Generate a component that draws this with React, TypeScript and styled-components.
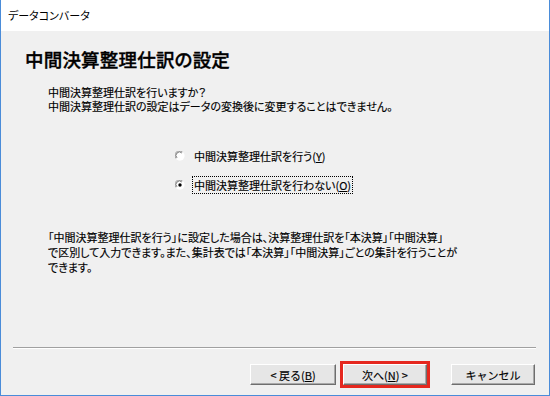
import React from "react";
import styled, { createGlobalStyle } from "styled-components";

const Global = createGlobalStyle`
  html, body { margin: 0; padding: 0; background: #ffffff; }
  body {
    font-family: "Noto Sans CJK JP", "Noto Sans", sans-serif;
    font-feature-settings: "palt" 1;
    color: #000000;
  }
  * { box-sizing: border-box; }
`;

const Window = styled.div`
  width: 550px;
  height: 396px;
  display: flex;
  flex-direction: column;
  border-left: 1px solid #4a8cd9;
  border-right: 1px solid #4a8cd9;
  border-bottom: 1px solid #4a8cd9;
  background: #f0f0f0;
`;

const TitleBar = styled.div`
  height: 31px;
  flex: none;
  display: flex;
  align-items: center;
  padding-left: 7px;
  padding-bottom: 1px;
  background: #ffffff;
  font-size: 11px;
`;

const Body = styled.div`
  flex: 1;
  display: flex;
  flex-direction: column;
  background: #f0f0f0;
`;

const Content = styled.div`
  padding: 16px 0 0 24px;
  display: flex;
  flex-direction: column;
`;

const Heading = styled.h1`
  margin: 0;
  font-size: 18.5px;
  line-height: 24px;
  font-weight: 500;
  letter-spacing: 0.2px;
  -webkit-text-stroke: 0.35px #000000;
`;

const Paragraph = styled.p<{ $top: number; $lh: number }>`
  margin: ${(p) => p.$top}px 0 0 23px;
  font-size: 11px;
  line-height: ${(p) => p.$lh}px;
  -webkit-text-stroke: 0.15px #000000;
`;

const RadioGroup = styled.div`
  margin: 34px 0 0 150px;
  display: flex;
  flex-direction: column;
  gap: 11px;
`;

const RadioRow = styled.label`
  height: 18px;
  display: flex;
  align-items: center;
  gap: 7px;
  font-size: 11px;
  -webkit-text-stroke: 0.15px #000000;
`;

const RadioLabel = styled.span<{ $focused?: boolean }>`
  padding: 1px;
  line-height: 14px;
  border: 1px dotted ${(p) => (p.$focused ? "#000000" : "transparent")};
`;

const Footer = styled.div`
  margin-top: auto;
  padding: 0 13px 10px 12px;
  display: flex;
  flex-direction: column;
`;

const Separator = styled.div`
  height: 2px;
  border-top: 1px solid #a0a0a0;
  border-bottom: 1px solid #ffffff;
  margin-bottom: 15px;
`;

const ButtonRow = styled.div`
  display: flex;
  justify-content: flex-end;
  padding-right: 1px;
`;

const Button = styled.button<{ $w: number; $gap: number; $highlight?: boolean }>`
  width: ${(p) => p.$w}px;
  height: 21px;
  margin-left: ${(p) => p.$gap}px;
  padding: 0;
  font-family: inherit;
  font-size: 11px;
  -webkit-text-stroke: 0.15px #000000;
  color: #000000;
  background: #e6e6e6;
  border: 1px solid;
  border-color: #ffffff #6e6e6e #6e6e6e #ffffff;
  box-shadow: inset -1px -1px 0 #a9a9a9;
  outline: ${(p) => (p.$highlight ? "3px solid #e5281f" : "none")};
  display: flex;
  align-items: center;
  justify-content: center;
  white-space: pre;
`;

const U = styled.span`
  text-decoration: underline;
  text-underline-offset: 1px;
`;

function RadioIcon({ checked }: { checked?: boolean }) {
  return (
    <svg width="10" height="10" viewBox="0 0 10 10">
      <circle cx="5" cy="5" r="4.5" fill="#ffffff" />
      <path d="M1.2 7.6 A4.2 4.2 0 0 1 7.6 1.2" fill="none" stroke="#9a9a9a" strokeWidth="1" />
      <path d="M2 6.9 A3.3 3.3 0 0 1 6.9 2" fill="none" stroke="#5a5a5a" strokeWidth="0.8" />
      <path d="M7.6 1.2 A4.2 4.2 0 0 1 1.2 7.6" fill="none" stroke="#ffffff" strokeWidth="1" />
      {checked && <circle cx="5" cy="5" r="1.7" fill="#000000" />}
    </svg>
  );
}

export default function App() {
  return (
    <>
      <Global />
      <Window>
        <TitleBar>データコンバータ</TitleBar>
        <Body>
          <Content>
            <Heading>中間決算整理仕訳の設定</Heading>
            <Paragraph $top={14} $lh={14}>
              中間決算整理仕訳を行いますか？
              <br />
              中間決算整理仕訳の設定はデータの変換後に変更することはできません。
            </Paragraph>
            <RadioGroup>
              <RadioRow>
                <RadioIcon />
                <RadioLabel>
                  中間決算整理仕訳を行う(<U>Y</U>)
                </RadioLabel>
              </RadioRow>
              <RadioRow>
                <RadioIcon checked />
                <RadioLabel $focused>
                  中間決算整理仕訳を行わない(<U>O</U>)
                </RadioLabel>
              </RadioRow>
            </RadioGroup>
            <Paragraph $top={36} $lh={15}>
              「中間決算整理仕訳を行う」に設定した場合は、決算整理仕訳を「本決算」「中間決算」
              <br />
              で区別して入力できます。また、集計表では「本決算」「中間決算」ごとの集計を行うことが
              <br />
              できます。
            </Paragraph>
          </Content>
          <Footer>
            <Separator />
            <ButtonRow>
              <Button $w={86} $gap={0}>
                {"< 戻る("}<U>B</U>{")"}
              </Button>
              <Button $w={84} $gap={7} $highlight>
                {"次へ("}<U>N</U>{") >"}
              </Button>
              <Button $w={84} $gap={24}>
                キャンセル
              </Button>
            </ButtonRow>
          </Footer>
        </Body>
      </Window>
    </>
  );
}
